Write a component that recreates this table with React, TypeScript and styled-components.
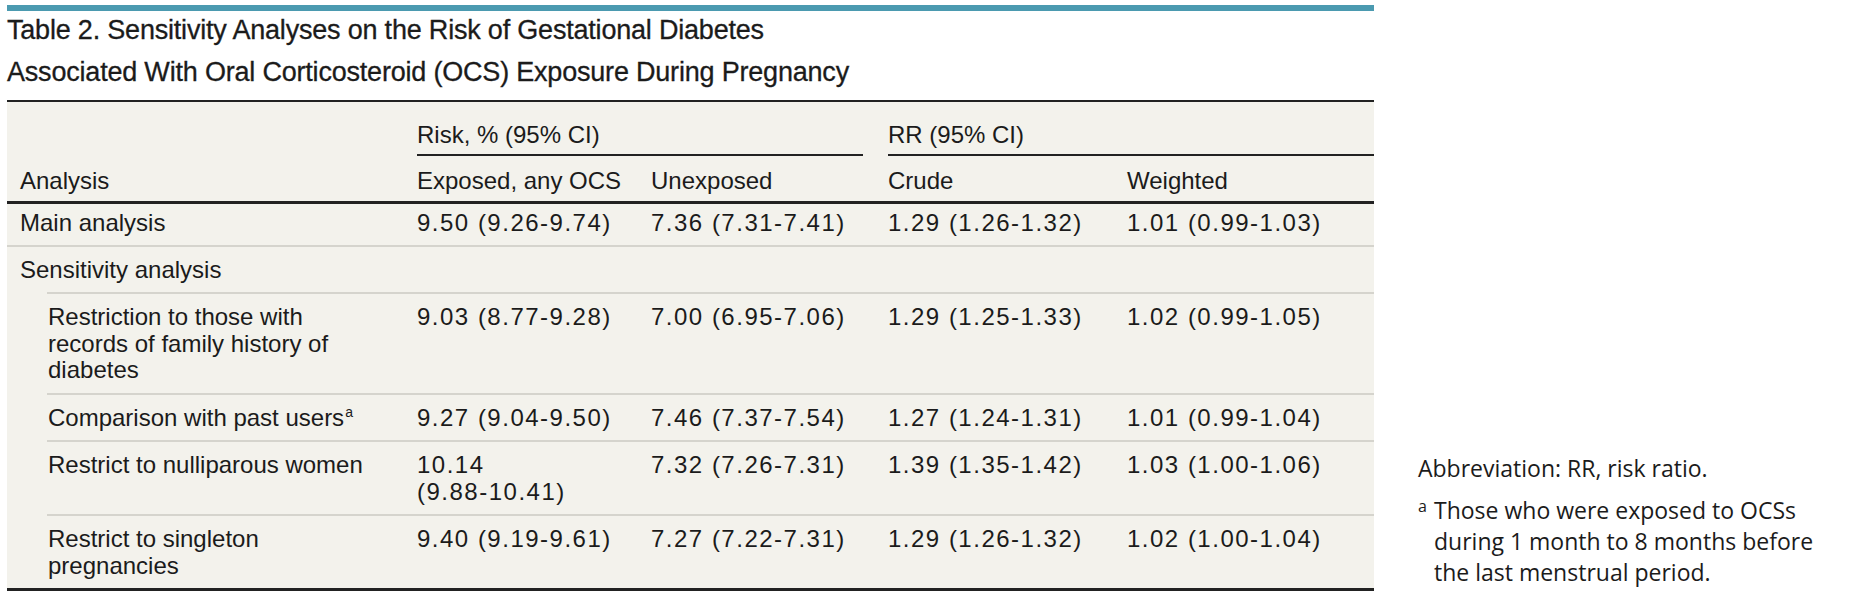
import React from "react";
import styled, { createGlobalStyle } from "styled-components";

const GlobalStyle = createGlobalStyle`
  html, body {
    margin: 0;
    padding: 0;
    background: #ffffff;
  }
  body {
    font-family: "Liberation Sans", Arial, sans-serif;
    color: #1b1b1b;
  }
`;

const Page = styled.div`
  display: flex;
  align-items: stretch;
  padding: 5px 0 0 7px;
`;

const Main = styled.div`
  flex: none;
  width: 1367px;
`;

const TopBar = styled.div`
  height: 6px;
  background: #4b9ab0;
`;

const Title = styled.h1`
  margin: -2px 0 7px;
  font-size: 27px;
  line-height: 42px;
  letter-spacing: -0.2px;
  font-weight: 400;
  -webkit-text-stroke: 0.3px #1b1b1b;
`;

const Table = styled.div`
  background: #f3f2ec;
  border-top: 2px solid #222;
  border-bottom: 3px solid #222;
  font-size: 24px;
  line-height: 26.5px;
`;

const COLS = "410px 234px 237px 239px 247px";
const INDENT_COLS = "370px 234px 237px 239px 247px";

const GroupRow = styled.div`
  display: grid;
  grid-template-columns: ${COLS};
`;

const GroupCell = styled.div<{ $span: string; $gapRight?: number }>`
  grid-column: ${(p) => p.$span};
  margin-right: ${(p) => p.$gapRight || 0}px;
  padding: 20px 0 5px;
  border-bottom: 2px solid #222;
`;

const HeadRow = styled.div`
  display: grid;
  grid-template-columns: ${COLS};
  border-bottom: 3px solid #222;
`;

const HeadCell = styled.div<{ $first?: boolean }>`
  padding: 12px 20px 7px ${(p) => (p.$first ? 13 : 0)}px;
  white-space: nowrap;
`;

const Row = styled.div<{ $indent?: boolean; $ruled?: boolean }>`
  display: grid;
  grid-template-columns: ${(p) => (p.$indent ? INDENT_COLS : COLS)};
  margin-left: ${(p) => (p.$indent ? 40 : 0)}px;
  border-top: ${(p) => (p.$ruled ? "2px solid #d5d4cd" : "none")};
`;

const Cell = styled.div<{ $first?: boolean; $indent?: boolean; $lead?: boolean }>`
  padding: ${(p) => (p.$lead ? "6px 10px 8px" : "10px 10px 9px")};
  padding-left: ${(p) => (p.$first ? (p.$indent ? 1 : 13) : 0)}px;
  white-space: pre-line;
  letter-spacing: ${(p) => (p.$first ? 0 : 1.5)}px;
`;

const Sup = styled.sup`
  font-size: 14px;
  line-height: 0;
  vertical-align: 9px;
  margin-left: 1px;
`;

const Notes = styled.div`
  flex: none;
  align-self: flex-end;
  width: 412px;
  margin-left: 44px;
  padding-bottom: 3px;
  font-family: "Open Sans", "Noto Sans", sans-serif;
  font-size: 23px;
  line-height: 31px;
  color: #1b1b1b;
`;

const Abbrev = styled.p`
  margin: 0 0 11px;
`;

const Note = styled.div`
  display: flex;
`;

const NoteMark = styled.span`
  flex: none;
  width: 16px;
  font-size: 16px;
  line-height: 22px;
`;

const NoteText = styled.span`
  flex: 1;
`;

type DataRow = {
  label: React.ReactNode;
  values: string[];
  indent?: boolean;
};

const rows: DataRow[] = [
  {
    label: "Main analysis",
    values: ["9.50 (9.26-9.74)", "7.36 (7.31-7.41)", "1.29 (1.26-1.32)", "1.01 (0.99-1.03)"],
  },
  { label: "Sensitivity analysis", values: ["", "", "", ""] },
  {
    label: "Restriction to those with\nrecords of family history of\ndiabetes",
    values: ["9.03 (8.77-9.28)", "7.00 (6.95-7.06)", "1.29 (1.25-1.33)", "1.02 (0.99-1.05)"],
    indent: true,
  },
  {
    label: (
      <>
        Comparison with past users<Sup>a</Sup>
      </>
    ),
    values: ["9.27 (9.04-9.50)", "7.46 (7.37-7.54)", "1.27 (1.24-1.31)", "1.01 (0.99-1.04)"],
    indent: true,
  },
  {
    label: "Restrict to nulliparous women",
    values: ["10.14\n(9.88-10.41)", "7.32 (7.26-7.31)", "1.39 (1.35-1.42)", "1.03 (1.00-1.06)"],
    indent: true,
  },
  {
    label: "Restrict to singleton\npregnancies",
    values: ["9.40 (9.19-9.61)", "7.27 (7.22-7.31)", "1.29 (1.26-1.32)", "1.02 (1.00-1.04)"],
    indent: true,
  },
];

export default function App() {
  return (
    <>
      <GlobalStyle />
      <Page>
        <Main>
          <TopBar />
          <Title>
            Table 2. Sensitivity Analyses on the Risk of Gestational Diabetes
            <br />
            Associated With Oral Corticosteroid (OCS) Exposure During Pregnancy
          </Title>
          <Table>
            <GroupRow>
              <GroupCell $span="2 / 4" $gapRight={25}>
                Risk, % (95% CI)
              </GroupCell>
              <GroupCell $span="4 / 6">RR (95% CI)</GroupCell>
            </GroupRow>
            <HeadRow>
              <HeadCell $first>Analysis</HeadCell>
              <HeadCell>Exposed, any OCS</HeadCell>
              <HeadCell>Unexposed</HeadCell>
              <HeadCell>Crude</HeadCell>
              <HeadCell>Weighted</HeadCell>
            </HeadRow>
            {rows.map((r, i) => (
              <Row key={i} $indent={r.indent} $ruled={i > 0}>
                <Cell $first $indent={r.indent} $lead={i === 0}>
                  {r.label}
                </Cell>
                {r.values.map((v, j) => (
                  <Cell key={j} $lead={i === 0}>
                    {v}
                  </Cell>
                ))}
              </Row>
            ))}
          </Table>
        </Main>
        <Notes>
          <Abbrev>Abbreviation: RR, risk ratio.</Abbrev>
          <Note>
            <NoteMark>a</NoteMark>
            <NoteText>
              Those who were exposed to OCSs during 1 month to 8 months before the last
              menstrual period.
            </NoteText>
          </Note>
        </Notes>
      </Page>
    </>
  );
}
